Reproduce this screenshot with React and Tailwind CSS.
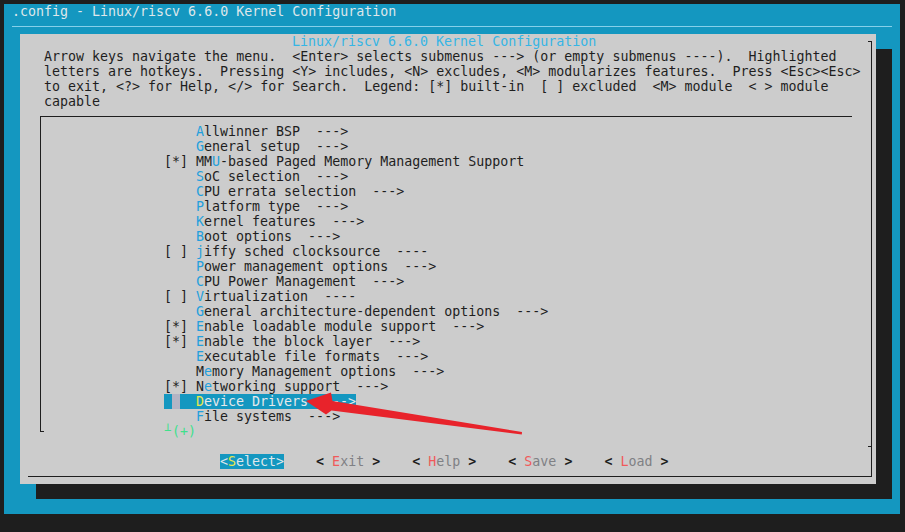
import React from "react";

const items = [
  { p: "    ", t: "Allwinner BSP  --->", k: 0 },
  { p: "    ", t: "General setup  --->", k: 0 },
  { p: "[*] ", t: "MMU-based Paged Memory Management Support", k: 2 },
  { p: "    ", t: "SoC selection  --->", k: 0 },
  { p: "    ", t: "CPU errata selection  --->", k: 0 },
  { p: "    ", t: "Platform type  --->", k: 0 },
  { p: "    ", t: "Kernel features  --->", k: 0 },
  { p: "    ", t: "Boot options  --->", k: 0 },
  { p: "[ ] ", t: "jiffy sched clocksource  ----", k: 0 },
  { p: "    ", t: "Power management options  --->", k: 0 },
  { p: "    ", t: "CPU Power Management  --->", k: 0 },
  { p: "[ ] ", t: "Virtualization  ----", k: 0 },
  { p: "    ", t: "General architecture-dependent options  --->", k: 0 },
  { p: "[*] ", t: "Enable loadable module support  --->", k: 0 },
  { p: "[*] ", t: "Enable the block layer  --->", k: 0 },
  { p: "    ", t: "Executable file formats  --->", k: 0 },
  { p: "    ", t: "Memory Management options  --->", k: 1 },
  { p: "[*] ", t: "Networking support  --->", k: 1 },
  { p: "    ", t: "Device Drivers  --->", k: 0, sel: true },
  { p: "    ", t: "File systems  --->", k: 0 },
];

const helpLines = [
  "Arrow keys navigate the menu.  <Enter> selects submenus ---> (or empty submenus ----).  Highlighted",
  "letters are hotkeys.  Pressing <Y> includes, <N> excludes, <M> modularizes features.  Press <Esc><Esc>",
  "to exit, <?> for Help, </> for Search.  Legend: [*] built-in  [ ] excluded  <M> module  < > module",
  "capable",
];

const buttons = [
  { k: "E", rest: "xit" },
  { k: "H", rest: "elp" },
  { k: "S", rest: "ave" },
  { k: "L", rest: "oad" },
];

const Item = ({ p, t, k, sel }) => {
  if (sel) {
    return (
      <div className="h-[15px] pl-[144px] flex">
        <div className="w-[192px] h-[15px] bg-[#1497c0] flex whitespace-pre text-[#e6e9eb]">
          <span className="inline-block w-[8px] h-[15px]" />
          <span className="inline-block w-[8px] h-[15px] bg-[#b4b4c4]" />
          <span className="inline-block w-[16px] h-[15px]" />
          <span className="text-[#e8e84c]">{t[k]}</span>
          <span>{t.slice(k + 1)}</span>
        </div>
      </div>
    );
  }
  return (
    <div className="h-[15px] pl-[144px] whitespace-pre text-[#1e1e1e]">
      {p}
      {t.slice(0, k)}
      <span className="text-[#229fdc]">{t[k]}</span>
      {t.slice(k + 1)}
    </div>
  );
};

export default function App() {
  return (
    <div className="relative w-[905px] h-[532px] overflow-hidden bg-[#1e1e1e] pt-[4px] pl-[4px] font-['DejaVu_Sans_Mono','Liberation_Mono',monospace] text-[13.3px] leading-[15px]">
      <div className="w-[896px] h-[510px] bg-[#1497c0] flex flex-col">
        {/* back title */}
        <div className="h-[15px] pl-[8px] whitespace-pre text-[#dfe7eb]">
          .config - Linux/riscv 6.6.0 Kernel Configuration
        </div>
        <div className="h-[15px] pt-[7px] pl-[8px]">
          <div className="w-[880px] h-px bg-[#86d0ea]" />
        </div>

        {/* dialog */}
        <div className="ml-[16px] w-[856px] h-[450px] bg-[#cccccc] shadow-[16px_15px_0_0_#1e1e1e] pt-[7px] pl-[8px] flex flex-col">
          <div className="w-[844px] h-[436px] border-r border-b border-[#1e1e1e] flex flex-col">
            <div className="-ml-[8px] -mt-[7px] w-[856px] flex flex-col">
              <div className="h-[15px] flex">
                <span className="pl-[272px] whitespace-pre text-[#35b5e5]">
                  Linux/riscv 6.6.0 Kernel Configuration
                </span>
                <div className="ml-auto mr-[4px] mt-[7px] w-[4px] h-px bg-[#1e1e1e]" />
              </div>

              {helpLines.map((line, i) => (
                <div key={i} className="h-[15px] pl-[24px] whitespace-pre text-[#1e1e1e]">
                  {line}
                </div>
              ))}

              {/* menu box */}
              <div className="h-[330px] flex flex-col">
                <div className="ml-[20px] mt-[7px] w-[812px] h-[316px] border-t border-l border-[#1e1e1e] flex flex-col">
                  <div className="-ml-[21px] mt-[7px] flex flex-col">
                    {items.map((it, i) => (
                      <Item key={i} {...it} />
                    ))}
                    <div className="h-[15px] flex">
                      <div className="ml-[20px] mt-[7px] w-[4px] h-px bg-[#1e1e1e]" />
                      <span className="ml-[120px] whitespace-pre text-[#40e08c]">
                        <span className="relative -top-[5px] inline-block w-[8px] text-[12px] leading-[15px]">
                          ⊥
                        </span>
                        (+)
                      </span>
                    </div>
                  </div>
                </div>
              </div>

              {/* separator tee */}
              <div className="h-[15px] flex justify-end">
                <div className="mr-[4px] mt-[7px] w-[4px] h-px bg-[#1e1e1e]" />
              </div>

              {/* buttons */}
              <div className="h-[15px] flex pl-[200px] gap-[32px] whitespace-pre">
                <span className="bg-[#1497c0] text-[#dfe7eb]">
                  &lt;<span className="text-[#e8e84c]">S</span>elect&gt;
                </span>
                {buttons.map((b) => (
                  <span key={b.k} className="text-[#7f8084]">
                    <span className="font-bold text-[#1e1e1e]">&lt;</span>{" "}
                    <span className="text-[#f05a5a]">{b.k}</span>
                    {b.rest}{" "}
                    <span className="font-bold text-[#1e1e1e]">&gt;</span>
                  </span>
                ))}
              </div>
            </div>
          </div>
        </div>
      </div>

      {/* annotation arrow */}
      <svg
        className="absolute left-0 top-0 pointer-events-none"
        width="905"
        height="532"
        viewBox="0 0 905 532"
      >
        <polygon
          points="306,401 331,392.5 332.5,401 522,432 521.8,434.5 331.5,410.5 326,414.5"
          fill="#e8232b"
        />
      </svg>
    </div>
  );
}
